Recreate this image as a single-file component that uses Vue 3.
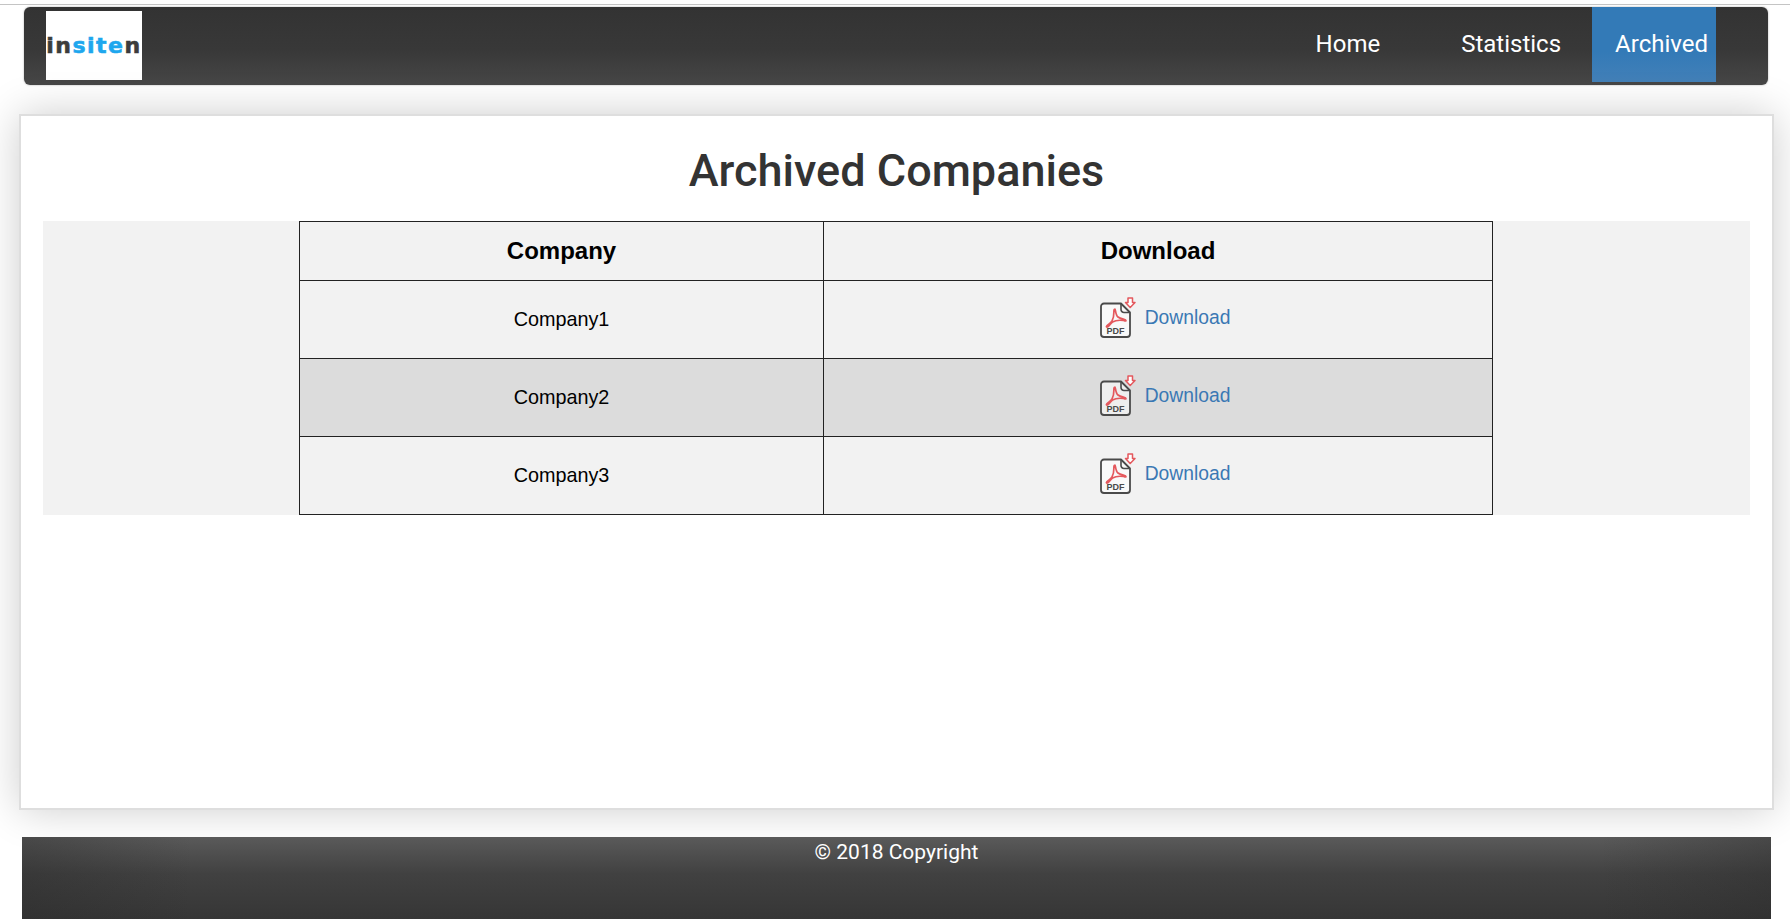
<template>
  <div class="page">
    <header class="navbar">
      <div class="logo"><span class="dark">in</span><span class="blue">site</span><span class="dark">n</span></div>
      <nav class="nav-links">
        <a v-for="link in links" :key="link.name" :class="['nav-link', { active: link.active }]">{{ link.name }}</a>
      </nav>
    </header>

    <main class="content">
      <h1>Archived Companies</h1>
      <div class="table-wrap">
        <table class="companies">
          <thead>
            <tr>
              <th class="col-company">Company</th>
              <th>Download</th>
            </tr>
          </thead>
          <tbody>
            <tr v-for="company in companies" :key="company">
              <td>{{ company }}</td>
              <td>
                <div class="download">
                  <svg class="pdf-icon" width="36" height="41" viewBox="0 0 36 41">
                    <path d="M21 6.500H4a3 3 0 0 0-3 3V37a3 3 0 0 0 3 3h23a3 3 0 0 0 3-3V15.500z" fill="#fff" fill-opacity="0.5" stroke="#4a4a4a" stroke-width="1.800" stroke-linejoin="round" />
                    <path d="M21 6.500v6a3 3 0 0 0 3 3h6" fill="none" stroke="#4a4a4a" stroke-width="1.600" />
                    <path d="M28 1h4.500v4.500H35L30.200 10.500 25.500 5.500H28z" fill="#fff" stroke="#e4585d" stroke-width="1.500" stroke-linejoin="round" />
                    <path d="M15 12c-2.500 0 .5 6.500-3 12-1.500 2.300-6.500 5-5.500 6 1.200 1.200 4-3.500 6-5 3.500-2 7.500-2 11-1.500 1.500.2 2.500 1 2.500 0 0-1.500-5-1-8-3.500-2.500-2-2.500-8-3-8z" fill="none" stroke="#e4585d" stroke-width="1.700" stroke-linejoin="round" />
                    <text x="15.500" y="37" text-anchor="middle" class="pdf-label">PDF</text>
                  </svg>
                  <a class="download-link">Download</a>
                </div>
              </td>
            </tr>
          </tbody>
        </table>
      </div>
    </main>

    <footer class="footer">© 2018 Copyright</footer>
  </div>
</template>

<script setup>
const links = [
  { name: 'Home' },
  { name: 'Statistics' },
  { name: 'Archived', active: true }
]

const companies = ['Company1', 'Company2', 'Company3']
</script>

<style>
html, body {
  margin: 0;
  height: 919px;
  overflow: hidden;
  background: #fff;
}
</style>

<style scoped>
.page {
  box-sizing: border-box;
  border-top: 1px solid #c4c4c4;
  margin-top: 4px;
  height: 915px;
  padding: 2px 16px 0 19px;
  font-family: Roboto, "Liberation Sans", sans-serif;
  display: flex;
  flex-direction: column;
  overflow: hidden;
}

.navbar {
  margin: 0 6px 0 5px;
  height: 78px;
  box-sizing: border-box;
  flex: none;
  display: flex;
  justify-content: space-between;
  padding: 0 52px 0 22px;
  background: linear-gradient(to bottom, #333 0%, #383838 55%, #474747 100%);
  border-radius: 6px;
  box-shadow: 0 0 2px rgba(0, 0, 0, 0.35);
}

.logo {
  width: 96px;
  height: 69px;
  margin-top: 4px;
  background: #fff;
  display: flex;
  align-items: center;
  justify-content: center;
  font-family: "DejaVu Sans", sans-serif;
  font-weight: 700;
  font-size: 22px;
  letter-spacing: 1.5px;
  -webkit-text-stroke: 0.6px currentColor;
  box-sizing: border-box;
}

.dark {
  color: #3c3c3c;
}

.blue {
  color: #1ea7ee;
}

.nav-links {
  display: flex;
  height: 75px;
}

.nav-link {
  color: #fff;
  font-size: 24px;
  display: flex;
  align-items: center;
  padding: 0 8px 2px 23px;
}

.nav-link:nth-child(1) {
  padding: 0 81px 2px 0;
}

.nav-link:nth-child(2) {
  padding: 0 31px 2px 0;
}

.nav-link.active {
  background: linear-gradient(to bottom, #337ab7 0%, #337ab7 60%, #4380b8 100%);
}

.content {
  flex: none;
  height: 696px;
  box-sizing: border-box;
  margin-top: 29px;
  background: #fff;
  border: 2px solid #dedede;
  box-shadow: 0 0 40px rgba(0, 0, 0, 0.2);
  padding: 0 22px;
}

h1 {
  margin: 30px 0 25px;
  font-size: 45px;
  line-height: 50px;
  font-weight: 500;
  color: #333;
  text-align: center;
}

.table-wrap {
  background: #f2f2f2;
  display: flex;
  justify-content: center;
  height: 294px;
}

.companies {
  width: 1194px;
  height: 293px;
  margin-left: -1px;
  border-collapse: collapse;
  font-family: "Liberation Sans", Arial, sans-serif;
  color: #000;
  font-size: 19.800px;
  table-layout: fixed;
}

.companies th,
.companies td {
  border: 1px solid #222;
  padding: 0;
  text-align: center;
  vertical-align: middle;
}

.companies th {
  font-size: 24px;
  height: 58px;
}

.col-company {
  width: 523px;
}

.companies tbody tr {
  height: 78px;
}

.companies tbody tr:nth-child(even) {
  background: #dcdcdc;
}

.download {
  display: flex;
  align-items: center;
  justify-content: center;
  gap: 9px;
  margin-left: 14px;
  margin-top: -4px;
}

.pdf-label {
  font-family: "Liberation Sans", Arial, sans-serif;
  font-size: 9px;
  font-weight: 700;
  fill: #4a4a4a;
}

.download-link {
  color: #3a78b4;
  font-size: 19.300px;
}

.footer {
  margin: 27px 3px 0;
  flex: 1;
  background:
    linear-gradient(to right, rgba(40, 40, 40, 0.35) 0, rgba(40, 40, 40, 0) 170px, rgba(40, 40, 40, 0) calc(100% - 170px), rgba(40, 40, 40, 0.35) 100%),
    linear-gradient(to bottom, #5a5a5a 0%, #414141 45%, #363636 100%);
  color: #fff;
  font-size: 21px;
  line-height: 30px;
  text-align: center;
  position: relative;
  z-index: 1;
}
</style>
